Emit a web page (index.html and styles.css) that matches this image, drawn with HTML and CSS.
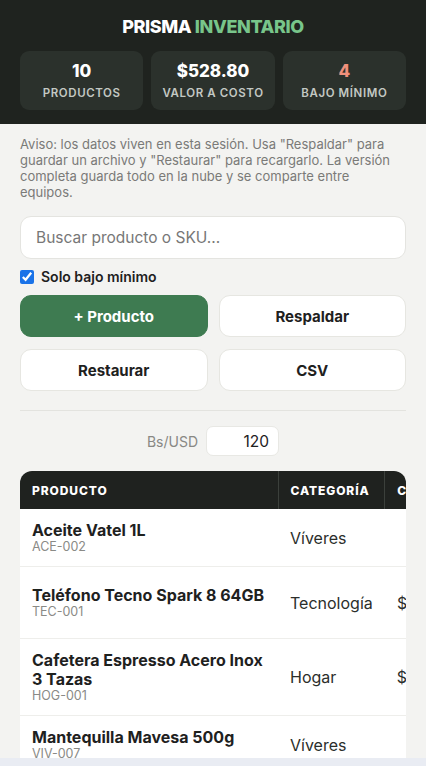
FILE: index.html
```html
<!DOCTYPE html>
<html lang="es">
  <head>
    <meta charset="utf-8">
    <title>Prisma Inventario</title>
    <link rel="stylesheet" href="styles.css">
  </head>
  <body>
    <header class="top">
      <h1 class="brand">PRISMA <span class="brand-accent">INVENTARIO</span></h1>
      <div class="stats">
        <div class="stat">
          <div class="stat-value">10</div>
          <div class="stat-label">Productos</div>
        </div>
        <div class="stat">
          <div class="stat-value">$528.80</div>
          <div class="stat-label">Valor a costo</div>
        </div>
        <div class="stat">
          <div class="stat-value stat-warn">4</div>
          <div class="stat-label">Bajo mínimo</div>
        </div>
      </div>
    </header>

    <main class="content">
      <p class="notice">
        Aviso: los datos viven en esta sesión. Usa "Respaldar" para guardar un
        archivo y "Restaurar" para recargarlo. La versión completa guarda todo
        en la nube y se comparte entre equipos.
      </p>

      <input class="search" type="text" placeholder="Buscar producto o SKU...">

      <label class="filter">
        <input type="checkbox" checked>
        <span>Solo bajo mínimo</span>
      </label>

      <div class="actions">
        <button class="btn btn-primary">+ Producto</button>
        <button class="btn">Respaldar</button>
        <button class="btn">Restaurar</button>
        <button class="btn">CSV</button>
      </div>

      <div class="rate">
        <span class="rate-label">Bs/USD</span>
        <input class="rate-input" type="text" value="120">
      </div>

      <div class="table-wrap">
        <table class="inventory">
          <thead>
            <tr>
              <th class="col-name">Producto</th>
              <th class="col-cat">Categoría</th>
              <th class="col-cost">Costo</th>
              <th>Stock</th>
            </tr>
          </thead>
          <tbody>
            <tr>
              <td><div class="p-name">Aceite Vatel 1L</div><div class="p-sku">ACE-002</div></td>
              <td>Víveres</td>
              <td class="num">$12.50</td>
              <td>3</td>
            </tr>
            <tr class="row-tall">
              <td><div class="p-name">Teléfono Tecno Spark 8 64GB</div><div class="p-sku">TEC-001</div></td>
              <td>Tecnología</td>
              <td class="num">$120.00</td>
              <td>2</td>
            </tr>
            <tr>
              <td><div class="p-name">Cafetera Espresso Acero Inox 3 Tazas</div><div class="p-sku">HOG-001</div></td>
              <td>Hogar</td>
              <td class="num">$100.00</td>
              <td>1</td>
            </tr>
            <tr>
              <td><div class="p-name">Mantequilla Mavesa 500g</div><div class="p-sku">VIV-007</div></td>
              <td>Víveres</td>
              <td class="num">$3.80</td>
              <td>6</td>
            </tr>
          </tbody>
        </table>
      </div>
    </main>
    <div class="bottom-bar"></div>
  </body>
</html>
```

FILE: styles.css
```css
* { box-sizing: border-box; }

body {
  margin: 0;
  background-color: #f3f3f1;
  font-family: Inter, "Liberation Sans", sans-serif;
  color: #1e211e;
  overflow: hidden;
}

/* header */
.top {
  background-color: #1f231f;
  padding: 16px 20px 14px;
}
.brand {
  margin: 0 0 13px;
  text-align: center;
  font-size: 18px;
  line-height: 22px;
  font-weight: 800;
  letter-spacing: -0.4px;
  color: #ffffff;
}
.brand-accent { color: #78c58a; }

.stats {
  display: grid;
  grid-template-columns: 1fr 1fr 1fr;
  gap: 8px;
}
.stat {
  background-color: #2b312c;
  border-radius: 9px;
  padding: 10px 4px 9px;
  text-align: center;
}
.stat-value {
  font-size: 17px;
  line-height: 20px;
  font-weight: 800;
  color: #ffffff;
}
.stat-warn { color: #f0907c; }
.stat-label {
  margin-top: 4px;
  font-size: 11.5px;
  line-height: 16px;
  font-weight: 600;
  letter-spacing: 0.6px;
  text-transform: uppercase;
  color: #c3c8c3;
}

/* body */
.content { padding: 12px 20px 0; }

.notice {
  margin: 0 0 16px;
  padding-right: 4px;
  font-size: 13px;
  line-height: 16px;
  color: #7a7a78;
}

.search {
  display: block;
  width: 100%;
  height: 43px;
  padding: 0 15px;
  border: 1px solid #e4e4e0;
  border-radius: 11px;
  background: #ffffff;
  font-family: inherit;
  font-size: 15.5px;
  color: #333;
}
.search::placeholder { color: #777; }

.filter {
  display: flex;
  align-items: center;
  gap: 7px;
  margin: 9px 0 10px;
  font-size: 14px;
  font-weight: 600;
  color: #1e211e;
}
.filter input {
  margin: 0;
  width: 14px;
  height: 14px;
  accent-color: #1a73e8;
}

.actions {
  display: grid;
  grid-template-columns: 1fr 1fr;
  gap: 12px 11px;
  padding-bottom: 19px;
  border-bottom: 1px solid #e3e3df;
}
.btn {
  height: 42px;
  border: 1px solid #e6e6e1;
  border-radius: 11px;
  background: #ffffff;
  font-family: inherit;
  font-size: 15px;
  font-weight: 700;
  color: #1e211e;
}
.btn-primary {
  background-color: #3e7b51;
  border-color: #3e7b51;
  color: #ffffff;
}

.rate {
  display: flex;
  justify-content: center;
  align-items: center;
  gap: 8px;
  margin: 15px 0 15px;
}
.rate-label {
  font-size: 14px;
  color: #888884;
}
.rate-input {
  width: 73px;
  height: 30px;
  padding: 0 9px;
  border: 1px solid #e8e8e4;
  border-radius: 7px;
  background: #ffffff;
  text-align: right;
  font-family: inherit;
  font-size: 15.5px;
  color: #1e211e;
}

/* table */
.table-wrap {
  overflow: hidden;
  border-radius: 12px 12px 0 0;
  background: #ffffff;
}
.inventory {
  border-collapse: collapse;
  width: 560px;
}
.inventory th {
  background-color: #1f221f;
  color: #ffffff;
  text-align: left;
  font-size: 12px;
  font-weight: 800;
  letter-spacing: 0.9px;
  text-transform: uppercase;
  height: 38px;
  padding: 0 12px;
  border-right: 1px solid #3b403b;
  white-space: nowrap;
}
.inventory .col-name { width: 258px; }
.inventory .col-cat { width: 106px; }
.inventory .col-cost { width: 84px; }
.inventory td {
  padding: 12px 12px;
  border-bottom: 1px solid #eeeeeb;
  vertical-align: middle;
  font-size: 16px;
  color: #2b2e2b;
}
.inventory td.num { text-align: right; white-space: nowrap; }
.row-tall td { height: 72px; }
.p-name {
  font-size: 16px;
  line-height: 19px;
  font-weight: 700;
  color: #1e211e;
}
.p-sku {
  font-size: 12.5px;
  line-height: 14px;
  color: #8a8a86;
}

.bottom-bar {
  position: fixed;
  left: 0;
  right: 0;
  bottom: 0;
  height: 8px;
  background-color: #e9ecf3;
}
```
